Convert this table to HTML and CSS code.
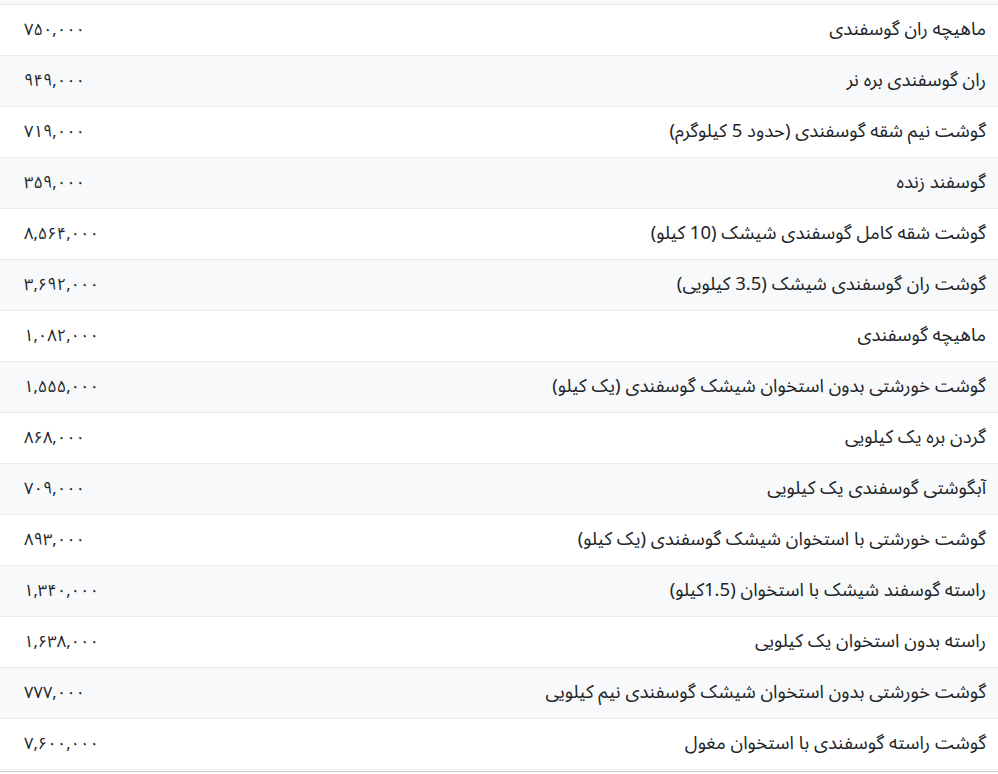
FILE: index.html
```html
<!DOCTYPE html>
<html lang="fa" dir="rtl">
<head>
<meta charset="utf-8">
<link rel="stylesheet" href="styles.css">
</head>
<body>
<table class="prices">
<tbody>
<tr class="stub"><td colspan="2"></td></tr>
<tr><td class="name">ماهیچه ران گوسفندی</td><td class="price">۷۵۰,۰۰۰</td></tr>
<tr><td class="name">ران گوسفندی بره نر</td><td class="price">۹۴۹,۰۰۰</td></tr>
<tr><td class="name">گوشت نیم شقه گوسفندی (حدود 5 کیلوگرم)</td><td class="price">۷۱۹,۰۰۰</td></tr>
<tr><td class="name">گوسفند زنده</td><td class="price">۳۵۹,۰۰۰</td></tr>
<tr><td class="name">گوشت شقه کامل گوسفندی شیشک (10 کیلو)</td><td class="price">۸,۵۶۴,۰۰۰</td></tr>
<tr><td class="name">گوشت ران گوسفندی شیشک (3.5 کیلویی)</td><td class="price">۳,۶۹۲,۰۰۰</td></tr>
<tr><td class="name">ماهیچه گوسفندی</td><td class="price">۱,۰۸۲,۰۰۰</td></tr>
<tr><td class="name">گوشت خورشتی بدون استخوان شیشک گوسفندی (یک کیلو)</td><td class="price">۱,۵۵۵,۰۰۰</td></tr>
<tr><td class="name">گردن بره یک کیلویی</td><td class="price">۸۶۸,۰۰۰</td></tr>
<tr><td class="name">آبگوشتی گوسفندی یک کیلویی</td><td class="price">۷۰۹,۰۰۰</td></tr>
<tr><td class="name">گوشت خورشتی با استخوان شیشک گوسفندی (یک کیلو)</td><td class="price">۸۹۳,۰۰۰</td></tr>
<tr><td class="name">راسته گوسفند شیشک با استخوان (1.5کیلو)</td><td class="price">۱,۳۴۰,۰۰۰</td></tr>
<tr><td class="name">راسته بدون استخوان یک کیلویی</td><td class="price">۱,۶۳۸,۰۰۰</td></tr>
<tr><td class="name">گوشت خورشتی بدون استخوان شیشک گوسفندی نیم کیلویی</td><td class="price">۷۷۷,۰۰۰</td></tr>
<tr><td class="name">گوشت راسته گوسفندی با استخوان مغول</td><td class="price">۷,۶۰۰,۰۰۰</td></tr>
</tbody>
</table>
<div class="rule"></div>
</body>
</html>
```

FILE: styles.css
```css
html, body {
  margin: 0;
  padding: 0;
  background: #ffffff;
}
body {
  font-family: "Noto Sans Arabic", "DejaVu Sans", "Noto Sans", sans-serif;
  color: #212529;
  font-size: 16px;
}
.prices {
  width: 100%;
  border-collapse: collapse;
  direction: rtl;
}
.prices td {
  height: 50px;
  padding: 0;
  border-bottom: 1px solid #e9ecef;
  vertical-align: middle;
  white-space: nowrap;
}
.prices tr:nth-child(odd) td {
  background: #f8f9fa;
}
.prices tr.stub td {
  height: 4px;
}
.name {
  text-align: right;
  padding-right: 12px !important;
  font-size: 18.5px;
  line-height: 24px;
}
.price {
  text-align: left;
  padding-left: 24px !important;
  width: 200px;
  font-size: 16.5px;
  line-height: 24px;
}
.rule {
  margin-top: 1px;
  height: 1px;
  background: #cfc8c2;
}
```
